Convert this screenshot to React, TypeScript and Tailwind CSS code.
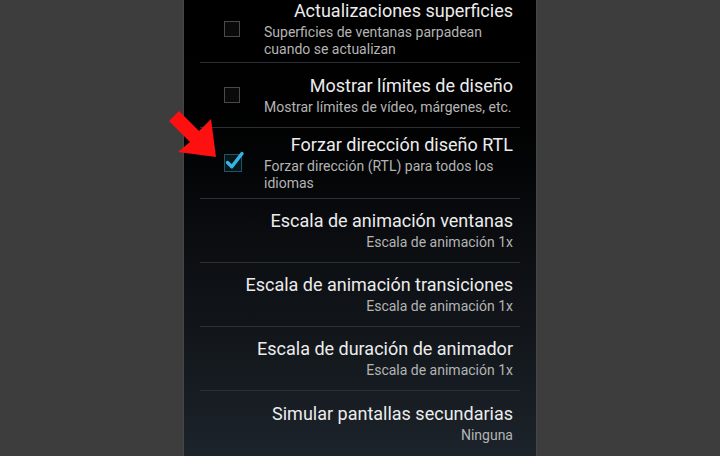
import React from 'react'

interface Pref {
  title: string
  summary: string[]
  checkbox?: 'on' | 'off'
  height: string
}

const prefs: Pref[] = [
  { title: 'Actualizaciones superficies', summary: ['Superficies de ventanas parpadean', 'cuando se actualizan'], checkbox: 'off', height: 'h-[62px]' },
  { title: 'Mostrar límites de diseño', summary: ['Mostrar límites de vídeo, márgenes, etc.'], checkbox: 'off', height: 'h-[64px]' },
  { title: 'Forzar dirección diseño RTL', summary: ['Forzar dirección (RTL) para todos los', 'idiomas'], checkbox: 'on', height: 'h-[70px]' },
  { title: 'Escala de animación ventanas', summary: ['Escala de animación 1x'], height: 'h-[63px]' },
  { title: 'Escala de animación transiciones', summary: ['Escala de animación 1x'], height: 'h-[63px]' },
  { title: 'Escala de duración de animador', summary: ['Escala de animación 1x'], height: 'h-[63px]' },
  { title: 'Simular pantallas secundarias', summary: ['Ninguna'], height: 'h-[65px]' },
]

function Checkbox({ checked }: { checked: boolean }) {
  if (!checked) {
    return <div className="w-4 h-4 shrink-0 border border-[#4a4a4a] bg-[#0a0a0a]" />
  }
  return (
    <svg width="22" height="24" viewBox="0 0 22 24" className="shrink-0 -mt-[6px]">
      <rect x="0.5" y="6.5" width="17" height="17" fill="#08161c" stroke="#1f5466" />
      <path d="M3.5 14.5 L7.8 18.8 L18 5.5" fill="none" stroke="#33b5e5" strokeWidth="3.4" strokeLinecap="round" strokeLinejoin="round" />
    </svg>
  )
}

function Row({ pref, first }: { pref: Pref; first: boolean }) {
  const text = (
    <div className={pref.checkbox ? 'w-[249px]' : ''}>
      <div className="text-[18px] leading-[22px] text-[#ececec] text-right whitespace-nowrap">{pref.title}</div>
      <div className={`mt-[2px] ${pref.checkbox ? 'text-left' : 'text-right'}`}>
        {pref.summary.map(line => (
          <div key={line} className="text-[14px] leading-[17px] text-[#b4b4b4] whitespace-nowrap">{line}</div>
        ))}
      </div>
    </div>
  )
  return (
    <div className={`${pref.height} flex ${first ? 'items-start' : 'items-center'} ${pref.checkbox ? 'justify-start' : 'justify-end'} pr-[7px]`}>
      {pref.checkbox ? (
        <div className="flex items-center">
          <div className="w-[40px] ml-[24px] flex items-center">
            <Checkbox checked={pref.checkbox === 'on'} />
          </div>
          {text}
        </div>
      ) : (
        text
      )}
    </div>
  )
}

export default function App() {
  return (
    <div className="relative w-[720px] h-[456px] overflow-hidden bg-[#3d3d3d] flex justify-center" style={{ fontFamily: 'Roboto, "Noto Sans", sans-serif' }}>
      <div className="w-[354px] h-full bg-gradient-to-b from-[#000000] via-[#0a0c0f] to-[#1c232a] border-x border-[#454545] px-[16px]">
        {prefs.map((p, i) => (
          <div key={p.title}>
            <Row pref={p} first={i === 0} />
            {i < prefs.length - 1 && <div className="h-px bg-[#2b3036]" />}
          </div>
        ))}
      </div>
      <svg className="absolute left-0 top-0" width="720" height="456" viewBox="0 0 720 456">
        <polygon points="169,121 179,111 199,131 211,119 216,157 178,152 190,142" fill="#ff1010" />
      </svg>
    </div>
  )
}
